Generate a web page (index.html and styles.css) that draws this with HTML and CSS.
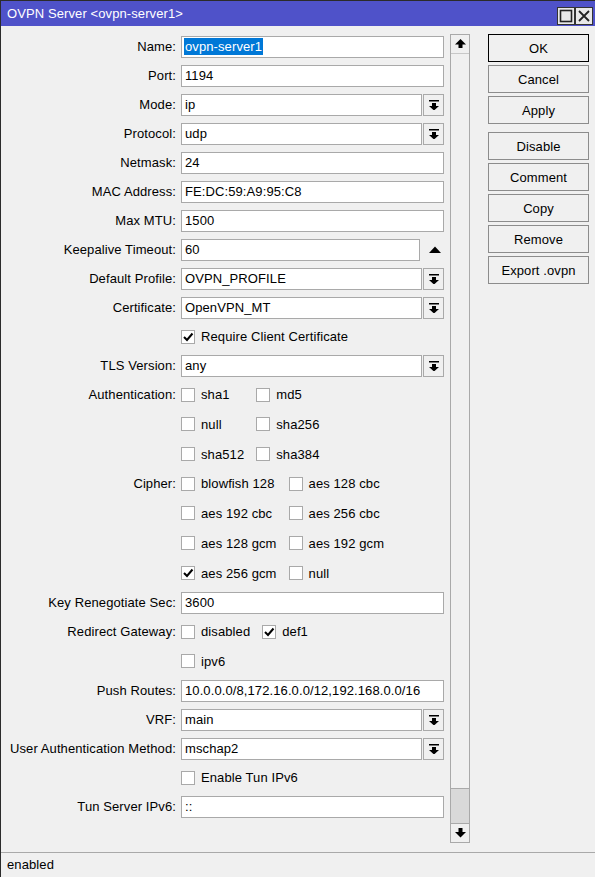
FILE: index.html
```html
<!DOCTYPE html>
<html lang="en">
<head>
    <meta charset="UTF-8">
    <title>OVPN Server &lt;ovpn-server1&gt;</title>
    <link rel="stylesheet" href="styles.css">
</head>
<body>
<div class="window">
    <div class="titlebar">
        <span class="title">OVPN Server &lt;ovpn-server1&gt;</span>
        <div class="title-btns">
            <span class="tbtn"><svg width="14" height="14" viewBox="0 0 14 14"><rect x="1.5" y="1.5" width="11" height="11" fill="none" stroke="#222" stroke-width="1.6"/></svg></span>
            <span class="tbtn"><svg width="14" height="14" viewBox="0 0 14 14"><path d="M2 2 L12 12 M12 2 L2 12" stroke="#222" stroke-width="1.8"/></svg></span>
        </div>
    </div>

    <div class="main">
        <div class="form">
            <div class="row"><label>Name:</label><div class="field"><span class="sel">ovpn-server1</span></div></div>
            <div class="row"><label>Port:</label><div class="field">1194</div></div>
            <div class="row"><label>Mode:</label><div class="combo"><div class="field">ip</div><span class="dd"></span></div></div>
            <div class="row"><label>Protocol:</label><div class="combo"><div class="field">udp</div><span class="dd"></span></div></div>
            <div class="row"><label>Netmask:</label><div class="field">24</div></div>
            <div class="row"><label>MAC Address:</label><div class="field">FE:DC:59:A9:95:C8</div></div>
            <div class="row"><label>Max MTU:</label><div class="field">1500</div></div>
            <div class="row"><label>Keepalive Timeout:</label><div class="combo"><div class="field">60</div><span class="spin"></span></div></div>
            <div class="row"><label>Default Profile:</label><div class="combo"><div class="field">OVPN_PROFILE</div><span class="dd"></span></div></div>
            <div class="row"><label>Certificate:</label><div class="combo"><div class="field">OpenVPN_MT</div><span class="dd"></span></div></div>
            <div class="row checks"><label></label>
                <div class="opts"><span class="cb on"><i></i>Require Client Certificate</span></div>
            </div>
            <div class="row"><label>TLS Version:</label><div class="combo"><div class="field">any</div><span class="dd"></span></div></div>
            <div class="row checks"><label>Authentication:</label>
                <div class="opts">
                    <span class="cb"><i></i>sha1</span><span class="cb"><i></i>md5</span>
                    <span class="cb"><i></i>null</span><span class="cb"><i></i>sha256</span>
                    <span class="cb"><i></i>sha512</span><span class="cb"><i></i>sha384</span>
                </div>
            </div>
            <div class="row checks"><label>Cipher:</label>
                <div class="opts">
                    <span class="cb"><i></i>blowfish 128</span><span class="cb"><i></i>aes 128 cbc</span>
                    <span class="cb"><i></i>aes 192 cbc</span><span class="cb"><i></i>aes 256 cbc</span>
                    <span class="cb"><i></i>aes 128 gcm</span><span class="cb"><i></i>aes 192 gcm</span>
                    <span class="cb on"><i></i>aes 256 gcm</span><span class="cb"><i></i>null</span>
                </div>
            </div>
            <div class="row"><label>Key Renegotiate Sec:</label><div class="field">3600</div></div>
            <div class="row checks"><label>Redirect Gateway:</label>
                <div class="opts">
                    <span class="cb"><i></i>disabled</span><span class="cb on"><i></i>def1</span>
                    <span class="cb"><i></i>ipv6</span>
                </div>
            </div>
            <div class="row"><label>Push Routes:</label><div class="field">10.0.0.0/8,172.16.0.0/12,192.168.0.0/16</div></div>
            <div class="row"><label>VRF:</label><div class="combo"><div class="field">main</div><span class="dd"></span></div></div>
            <div class="row"><label>User Authentication Method:</label><div class="combo"><div class="field">mschap2</div><span class="dd"></span></div></div>
            <div class="row checks"><label></label>
                <div class="opts"><span class="cb"><i></i>Enable Tun IPv6</span></div>
            </div>
            <div class="row"><label>Tun Server IPv6:</label><div class="field">::</div></div>
        </div>

        <div class="scrollbar">
            <span class="sb-btn up"></span>
            <span class="sb-track"></span>
            <span class="sb-thumb"></span>
            <span class="sb-btn down"></span>
        </div>

        <div class="buttons">
            <button class="btn default">OK</button>
            <button class="btn">Cancel</button>
            <button class="btn sep">Apply</button>
            <button class="btn">Disable</button>
            <button class="btn">Comment</button>
            <button class="btn">Copy</button>
            <button class="btn">Remove</button>
            <button class="btn">Export .ovpn</button>
        </div>
    </div>

    <div class="status">enabled</div>
</div>
</body>
</html>
```

FILE: styles.css
```css
html, body { margin: 0; padding: 0; overflow: hidden; }
body { font-family: "Liberation Sans", Arial, sans-serif; font-size: 13px; letter-spacing: 0.1px; color: #000; background: #f0f0f0; }

.window { width: 600px; height: 877px; box-sizing: border-box; border-left: 1px solid #2b2b2b; border-top: 1px solid #2b2b2b; display: flex; flex-direction: column; background: #f0f0f0; }

.titlebar { height: 25px; box-sizing: border-box; background: #4f52c9; color: #fff; display: flex; justify-content: space-between; padding: 5px 7px 0 6px; }
.title { line-height: 15px; }
.title-btns { display: flex; margin-top: 1px; }
.tbtn { width: 18px; height: 18px; box-sizing: border-box; border: 1px solid #333; background: #e8e8e8; display: flex; align-items: center; justify-content: center; }

.main { flex: 1; display: flex; align-items: stretch; padding: 8px 0 9px 0; }

.form { width: 443px; margin-top: -2px; }
.row { display: grid; grid-template-columns: 175px 263px; column-gap: 5px; height: 29px; align-items: center; }
.row label { text-align: right; white-space: nowrap; line-height: 29px; align-self: start; }

.field { height: 22px; box-sizing: border-box; border: 1px solid #a9a9a9; background: #fff; padding: 0 3px; line-height: 20px; white-space: nowrap; overflow: hidden; }
.sel { background: #0078d7; color: #fff; margin-left: -1px; padding: 1px 1px; }

.combo { display: flex; gap: 1px; }
.combo .field { flex: 1; }
.dd { width: 21px; height: 22px; box-sizing: border-box; border: 1px solid #a9a9a9; background: #f0f0f0 url("data:image/svg+xml,%3Csvg xmlns='http://www.w3.org/2000/svg' width='10' height='10'%3E%3Crect x='0' y='0' width='10' height='1.5' fill='%23000'/%3E%3Crect x='3' y='3' width='4' height='3' fill='%23000'/%3E%3Cpath d='M0 6 H10 L5 10.5 Z' fill='%23000'/%3E%3C/svg%3E") no-repeat center; }
.spin { width: 21px; height: 22px; background: url("data:image/svg+xml,%3Csvg xmlns='http://www.w3.org/2000/svg' width='12' height='7'%3E%3Cpath d='M0 7 L6 0.5 L12 7 Z' fill='%23000'/%3E%3C/svg%3E") no-repeat 6px 7px; margin-left: 2px; }

.row.checks { height: auto; }
.opts { display: grid; grid-template-columns: auto auto; justify-content: start; column-gap: 12px; grid-template-rows: 29px; grid-auto-rows: 30px; align-items: center; }
.cb { display: flex; align-items: center; gap: 6px; white-space: nowrap; }
.cb i { width: 14px; height: 14px; box-sizing: border-box; border: 1px solid #a9a9a9; background: #fff; }
.cb.on i { background: #fff url("data:image/svg+xml,%3Csvg xmlns='http://www.w3.org/2000/svg' width='12' height='12'%3E%3Cpath d='M2 6 L5 9 L10.5 2.5' fill='none' stroke='%23000' stroke-width='2'/%3E%3C/svg%3E") no-repeat center; }

.scrollbar { width: 20px; box-sizing: border-box; border: 1px solid #a9a9a9; margin-left: 6px; display: flex; flex-direction: column; background: #f0f0f0; }
.sb-btn { height: 19px; box-sizing: border-box; background-color: #f0f0f0; background-repeat: no-repeat; background-position: center; }
.sb-btn.up { border-bottom: 1px solid #c8c8c8; background-image: url("data:image/svg+xml,%3Csvg xmlns='http://www.w3.org/2000/svg' width='11' height='10'%3E%3Cpath d='M0 5.5 L5.5 0 L11 5.5 Z' fill='%23000'/%3E%3Crect x='3.5' y='5' width='4' height='4' fill='%23000'/%3E%3C/svg%3E"); }
.sb-btn.down { border-top: 1px solid #a9a9a9; background-image: url("data:image/svg+xml,%3Csvg xmlns='http://www.w3.org/2000/svg' width='11' height='10'%3E%3Crect x='3.5' y='0' width='4' height='4.5' fill='%23000'/%3E%3Cpath d='M0 4 L11 4 L5.5 9.5 Z' fill='%23000'/%3E%3C/svg%3E"); }
.sb-track { flex: 1; }
.sb-thumb { height: 35px; box-sizing: border-box; border-top: 1px solid #a9a9a9; background: #d9d9d9; }

.buttons { margin-left: 18px; display: flex; flex-direction: column; }
.btn { width: 101px; height: 28px; box-sizing: border-box; border: 1px solid #8c8c8c; background: #f0f0f0; font-family: "Liberation Sans", Arial, sans-serif; font-size: 13px; letter-spacing: 0.1px; color: #000; margin: 0 0 3px 0; padding: 0; border-radius: 0; }
.btn.default { border-color: #000; }
.btn.sep { margin-bottom: 8px; }

.status { height: 25px; box-sizing: border-box; border-top: 1px solid #a9a9a9; padding-left: 6px; line-height: 23px; }
```
